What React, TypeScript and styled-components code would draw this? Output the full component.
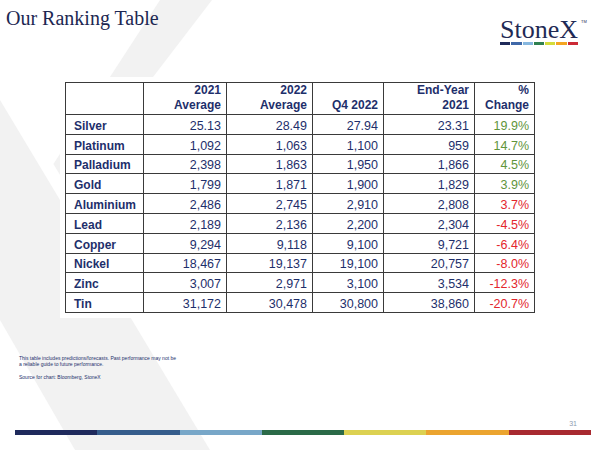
import React from "react";
import styled, { createGlobalStyle } from "styled-components";

const GlobalStyle = createGlobalStyle`
  html, body {
    margin: 0;
    padding: 0;
    background: #fff;
  }
  body {
    font-family: "Liberation Sans", Arial, sans-serif;
  }
`;

const Slide = styled.div`
  position: relative;
  width: 600px;
  height: 450px;
  overflow: hidden;
  background: #fff;
  display: flex;
  flex-direction: column;
`;

const Backdrop = styled.svg`
  position: absolute;
  left: 0;
  top: 0;
  width: 600px;
  height: 450px;
`;

const Header = styled.header`
  position: relative;
  height: 77px;
  box-sizing: border-box;
  display: flex;
  justify-content: space-between;
  align-items: flex-start;
  padding: 5.5px 22px 0 6px;
`;

const Title = styled.h1`
  margin: 0;
  font: 400 20px/24px "Liberation Serif", "Times New Roman", serif;
  color: #1c2752;
`;

const Logo = styled.div`
  margin-top: 13px;
  width: 78px;
  display: flex;
  flex-direction: column;
`;

const Wordmark = styled.div`
  position: relative;
  font: 400 26px/22px "Liberation Serif", "Times New Roman", serif;
  color: #1f2a55;
  white-space: nowrap;
`;

const Tm = styled.span`
  position: absolute;
  left: 81px;
  top: 1px;
  font: 400 4px/4px "Liberation Sans", Arial, sans-serif;
  color: #1f2a55;
`;

const Stripe = styled.div`
  display: flex;
  gap: 1px;
  height: 3px;
  margin-top: 1px;
`;

const Chip = styled.span<{ $c: string }>`
  flex: 1;
  background: ${(p) => p.$c};
`;

const TableBox = styled.div`
  position: relative;
  align-self: flex-start;
  margin-left: 60px;
  padding: 5px;
  background: #fff;
`;

const Grid = styled.table`
  border-collapse: collapse;
  table-layout: fixed;
  width: 469px;
  border: 1.5px solid #3a3a3a;
  color: #1e2f6b;

  td, th {
    border: 1.5px solid #3a3a3a;
    overflow: hidden;
    white-space: nowrap;
  }
`;

const HeadRow = styled.tr`
  height: 32px;
`;

const BodyRow = styled.tr`
  height: 19.8px;
`;

const HeadCell = styled.th`
  vertical-align: bottom;
  text-align: right;
  padding: 0 5px 2px 4px;
  font: 700 12px/14.3px "Liberation Sans", Arial, sans-serif;
`;

const NameCell = styled.td`
  vertical-align: middle;
  text-align: left;
  padding: 3px 4px 0 8px;
  font: 700 12px/14px "Liberation Sans", Arial, sans-serif;
`;

const NumCell = styled.td<{ $tone?: "up" | "down" }>`
  vertical-align: middle;
  text-align: right;
  padding: 3px 5px 0 4px;
  font: 400 12.5px/14px "Liberation Sans", Arial, sans-serif;
  color: ${(p) =>
    p.$tone === "up" ? "#5f953b" : p.$tone === "down" ? "#e3262d" : "inherit"};
`;

const Note = styled.div`
  position: relative;
  margin: 37px 0 0 19px;
  font: 400 5px/6.5px "Liberation Sans", Arial, sans-serif;
  color: #1e2f6b;

  p {
    margin: 0;
  }
  p + p {
    margin-top: 6.5px;
  }
`;

const Footer = styled.footer`
  position: relative;
  margin-top: auto;
  padding: 0 9px 15px 15px;
`;

const PageNo = styled.div`
  text-align: right;
  padding-right: 14px;
  margin-bottom: 2px;
  font: 400 7px/8px "Liberation Sans", Arial, sans-serif;
  color: #8d9bb0;
`;

const Band = styled.div`
  display: flex;
  height: 5px;
`;

const logoColors = ["#1f2a5a", "#3f68a8", "#86b7df", "#2f8050", "#d4dc3a", "#f4a521", "#cc2a36"];
const bandColors = ["#1f2a5c", "#365d8c", "#78a7c8", "#2b6a48", "#dcd152", "#eba42f", "#a82a30"];

type Row = {
  name: string;
  values: string[];
  change: string;
  tone: "up" | "down";
};

const rows: Row[] = [
  { name: "Silver", values: ["25.13", "28.49", "27.94", "23.31"], change: "19.9%", tone: "up" },
  { name: "Platinum", values: ["1,092", "1,063", "1,100", "959"], change: "14.7%", tone: "up" },
  { name: "Palladium", values: ["2,398", "1,863", "1,950", "1,866"], change: "4.5%", tone: "up" },
  { name: "Gold", values: ["1,799", "1,871", "1,900", "1,829"], change: "3.9%", tone: "up" },
  { name: "Aluminium", values: ["2,486", "2,745", "2,910", "2,808"], change: "3.7%", tone: "down" },
  { name: "Lead", values: ["2,189", "2,136", "2,200", "2,304"], change: "-4.5%", tone: "down" },
  { name: "Copper", values: ["9,294", "9,118", "9,100", "9,721"], change: "-6.4%", tone: "down" },
  { name: "Nickel", values: ["18,467", "19,137", "19,100", "20,757"], change: "-8.0%", tone: "down" },
  { name: "Zinc", values: ["3,007", "2,971", "3,100", "3,534"], change: "-12.3%", tone: "down" },
  { name: "Tin", values: ["31,172", "30,478", "30,800", "38,860"], change: "-20.7%", tone: "down" },
];

const colWidths = [78, 83, 86, 71, 91, 60];

export default function App() {
  return (
    <>
      <GlobalStyle />
      <Slide>
        <Backdrop viewBox="0 0 600 450">
          <polygon points="160,0 212,0 68,188 53.4,164" fill="#f2f2f2" />
          <polygon points="0,100 210,450 75,450 0,320" fill="#f2f2f2" />
        </Backdrop>

        <Header>
          <Title>Our Ranking Table</Title>
          <Logo>
            <Wordmark>
              StoneX<Tm>TM</Tm>
            </Wordmark>
            <Stripe>
              {logoColors.map((c) => (
                <Chip key={c} $c={c} />
              ))}
            </Stripe>
          </Logo>
        </Header>

        <TableBox>
          <Grid>
            <colgroup>
              {colWidths.map((w, i) => (
                <col key={i} style={{ width: w }} />
              ))}
            </colgroup>
            <thead>
              <HeadRow>
                <HeadCell />
                <HeadCell>2021<br />Average</HeadCell>
                <HeadCell>2022<br />Average</HeadCell>
                <HeadCell>Q4 2022</HeadCell>
                <HeadCell>End-Year<br />2021</HeadCell>
                <HeadCell>%<br />Change</HeadCell>
              </HeadRow>
            </thead>
            <tbody>
              {rows.map((r) => (
                <BodyRow key={r.name}>
                  <NameCell>{r.name}</NameCell>
                  {r.values.map((v, i) => (
                    <NumCell key={i}>{v}</NumCell>
                  ))}
                  <NumCell $tone={r.tone}>{r.change}</NumCell>
                </BodyRow>
              ))}
            </tbody>
          </Grid>
        </TableBox>

        <Note>
          <p>
            This table includes predictions/forecasts. Past performance may not be
            <br />
            a reliable guide to future performance.
          </p>
          <p>Source for chart: Bloomberg, StoneX</p>
        </Note>

        <Footer>
          <PageNo>31</PageNo>
          <Band>
            {bandColors.map((c) => (
              <Chip key={c} $c={c} />
            ))}
          </Band>
        </Footer>
      </Slide>
    </>
  );
}
